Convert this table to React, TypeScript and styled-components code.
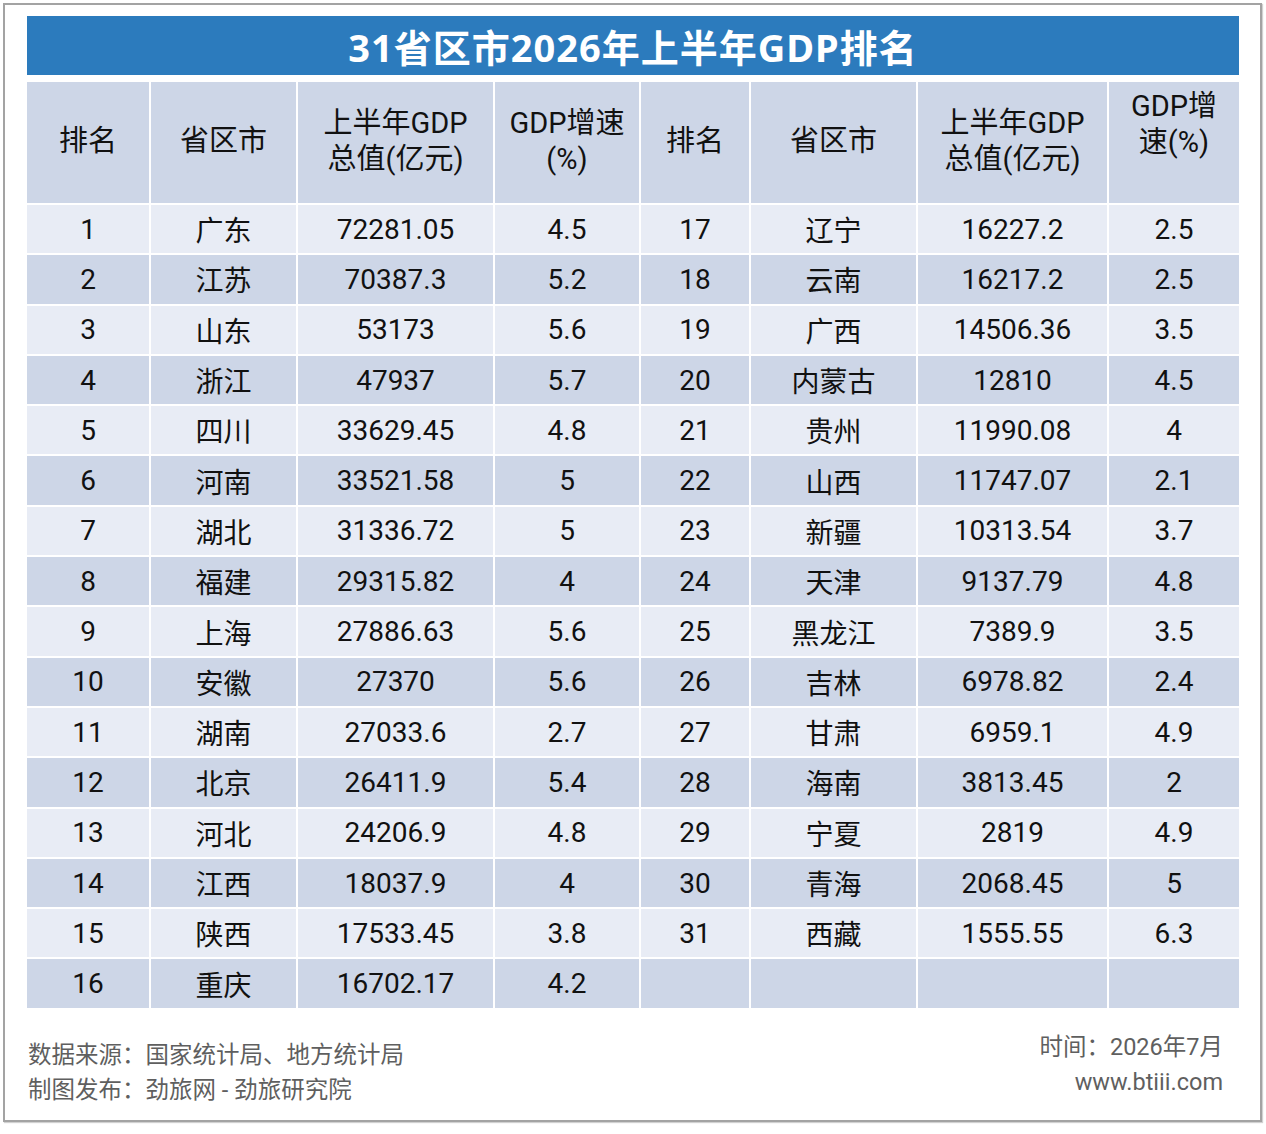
import React from 'react';
import styled, { createGlobalStyle } from 'styled-components';

type Row = [string, string, string, string];

const leftRows: Row[] = [
  ['1', '广东', '72281.05', '4.5'],
  ['2', '江苏', '70387.3', '5.2'],
  ['3', '山东', '53173', '5.6'],
  ['4', '浙江', '47937', '5.7'],
  ['5', '四川', '33629.45', '4.8'],
  ['6', '河南', '33521.58', '5'],
  ['7', '湖北', '31336.72', '5'],
  ['8', '福建', '29315.82', '4'],
  ['9', '上海', '27886.63', '5.6'],
  ['10', '安徽', '27370', '5.6'],
  ['11', '湖南', '27033.6', '2.7'],
  ['12', '北京', '26411.9', '5.4'],
  ['13', '河北', '24206.9', '4.8'],
  ['14', '江西', '18037.9', '4'],
  ['15', '陕西', '17533.45', '3.8'],
  ['16', '重庆', '16702.17', '4.2'],
];

const rightRows: Row[] = [
  ['17', '辽宁', '16227.2', '2.5'],
  ['18', '云南', '16217.2', '2.5'],
  ['19', '广西', '14506.36', '3.5'],
  ['20', '内蒙古', '12810', '4.5'],
  ['21', '贵州', '11990.08', '4'],
  ['22', '山西', '11747.07', '2.1'],
  ['23', '新疆', '10313.54', '3.7'],
  ['24', '天津', '9137.79', '4.8'],
  ['25', '黑龙江', '7389.9', '3.5'],
  ['26', '吉林', '6978.82', '2.4'],
  ['27', '甘肃', '6959.1', '4.9'],
  ['28', '海南', '3813.45', '2'],
  ['29', '宁夏', '2819', '4.9'],
  ['30', '青海', '2068.45', '5'],
  ['31', '西藏', '1555.55', '6.3'],
  ['', '', '', ''],
];

const GlobalStyle = createGlobalStyle`
  body {
    margin: 0;
    background: #ffffff;
    font-family: Roboto, "Noto Sans CJK SC", sans-serif;
  }
`;

const Page = styled.div`
  padding: 3px;
`;

const Frame = styled.div`
  box-sizing: border-box;
  width: 1259px;
  height: 1119px;
  border: 2px solid #a3a3a3;
  box-shadow: 1px 1px 1px rgba(0, 0, 0, 0.18);
  padding: 11px 21px 0 22px;
  display: flex;
  flex-direction: column;
`;

const TitleBar = styled.div`
  height: 59px;
  background: #2c7bbd;
  color: #ffffff;
  display: flex;
  align-items: center;
  justify-content: center;
  font-family: "Noto Sans", "Noto Sans CJK SC", sans-serif;
  font-size: 38px;
  font-weight: 700;
  letter-spacing: 1px;
`;

const Table = styled.div`
  margin-top: 7px;
  display: grid;
  grid-template-columns: 122px 145px 195px 144px 108px 165px 189px 130px;
  grid-template-rows: 121px repeat(16, 48.3px);
  gap: 2px;
  background: #ffffff;
`;

const HeadCell = styled.div<{ $raise?: boolean }>`
  background: #cdd6e7;
  color: #111111;
  display: flex;
  align-items: center;
  justify-content: center;
  text-align: center;
  font-size: 29px;
  line-height: 36px;
  padding-bottom: ${(p) => (p.$raise ? '38px' : '4px')};
  box-sizing: border-box;
`;

const Cell = styled.div<{ $band: boolean }>`
  background: ${(p) => (p.$band ? '#cdd6e7' : '#e8ecf5')};
  color: #111111;
  display: flex;
  align-items: center;
  justify-content: center;
  font-size: 28px;
`;

const Footer = styled.div`
  display: flex;
  justify-content: space-between;
  align-items: flex-start;
  padding-top: 22px;
`;

const Note = styled.div<{ $right?: boolean }>`
  color: #5f5f5f;
  font-size: 23.5px;
  line-height: 35px;
  margin-top: ${(p) => (p.$right ? '0' : '8px')};
  padding-left: ${(p) => (p.$right ? '0' : '1px')};
  padding-right: ${(p) => (p.$right ? '16px' : '0')};
  text-align: ${(p) => (p.$right ? 'right' : 'left')};
`;

const App: React.FC = () => {
  return (
    <Page>
      <GlobalStyle />
      <Frame>
        <TitleBar>31省区市2026年上半年GDP排名</TitleBar>
        <Table>
          <HeadCell>排名</HeadCell>
          <HeadCell>省区市</HeadCell>
          <HeadCell>
            上半年GDP
            <br />
            总值(亿元)
          </HeadCell>
          <HeadCell>
            GDP增速
            <br />
            (%)
          </HeadCell>
          <HeadCell>排名</HeadCell>
          <HeadCell>省区市</HeadCell>
          <HeadCell>
            上半年GDP
            <br />
            总值(亿元)
          </HeadCell>
          <HeadCell $raise>
            GDP增
            <br />
            速(%)
          </HeadCell>
          {leftRows.map((row, i) => {
            const band = i % 2 === 1;
            return (
              <React.Fragment key={i}>
                {[...row, ...rightRows[i]].map((v, j) => (
                  <Cell key={j} $band={band}>
                    {v}
                  </Cell>
                ))}
              </React.Fragment>
            );
          })}
        </Table>
        <Footer>
          <Note>
            数据来源：国家统计局、地方统计局
            <br />
            制图发布：劲旅网 - 劲旅研究院
          </Note>
          <Note $right>
            时间：2026年7月
            <br />
            www.btiii.com
          </Note>
        </Footer>
      </Frame>
    </Page>
  );
};

export default App;
